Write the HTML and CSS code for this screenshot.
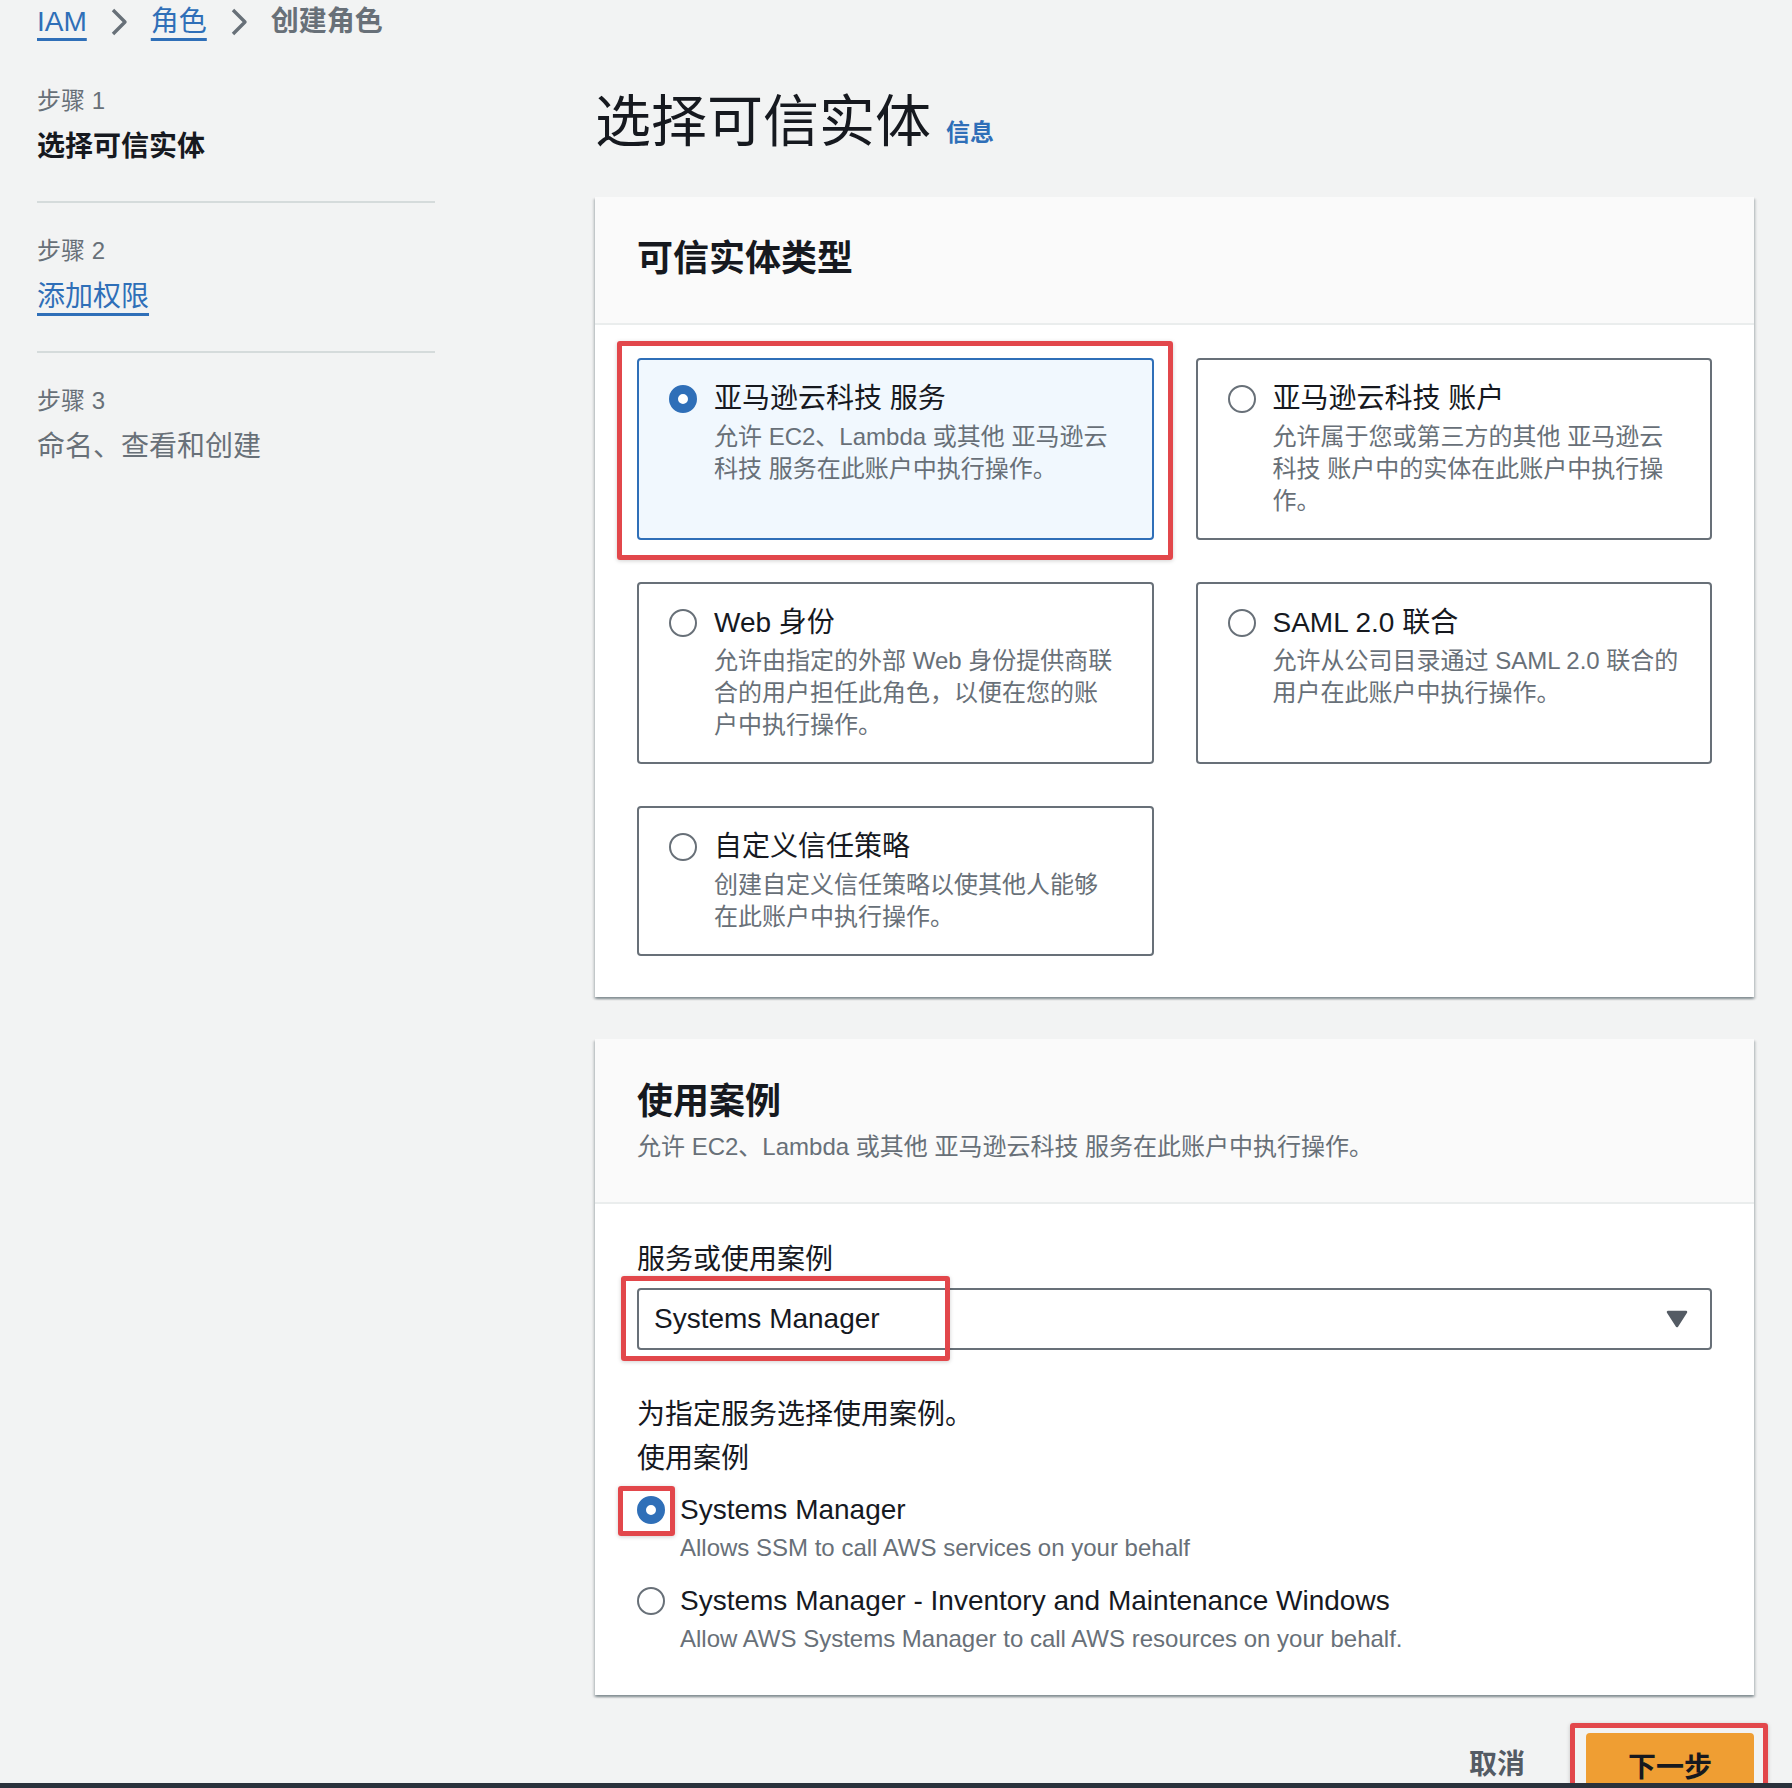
FILE: index.html
```html
<!DOCTYPE html>
<html lang="zh-CN">
<head>
<meta charset="utf-8">
<title>创建角色</title>
<link rel="stylesheet" href="styles.css">
</head>
<body>
<div class="page">
  <nav class="breadcrumb">
    <a class="crumb-link">IAM</a>
    <svg class="chev" viewBox="0 0 18 30" width="18" height="30"><polyline points="3,3 15,15 3,27" fill="none" stroke="#687078" stroke-width="3.4" stroke-linejoin="round"/></svg>
    <a class="crumb-link">角色</a>
    <svg class="chev" viewBox="0 0 18 30" width="18" height="30"><polyline points="3,3 15,15 3,27" fill="none" stroke="#687078" stroke-width="3.4" stroke-linejoin="round"/></svg>
    <span class="crumb-current">创建角色</span>
  </nav>

  <div class="layout">
    <aside class="steps">
      <div class="step">
        <div class="step-label">步骤 1</div>
        <div class="step-title current">选择可信实体</div>
      </div>
      <div class="step">
        <div class="step-label">步骤 2</div>
        <div class="step-title"><a class="step-link">添加权限</a></div>
      </div>
      <div class="step last">
        <div class="step-label">步骤 3</div>
        <div class="step-title disabled">命名、查看和创建</div>
      </div>
    </aside>

    <main class="content">
      <div class="title-row">
        <h1 class="page-title">选择可信实体</h1>
        <a class="info-link">信息</a>
      </div>

      <section class="container">
        <header class="container-header">
          <h2 class="container-title">可信实体类型</h2>
        </header>
        <div class="tiles">
          <div class="tile-wrap">
            <div class="tile selected">
              <span class="radio checked"></span>
              <div class="tile-text">
                <div class="tile-title">亚马逊云科技 服务</div>
                <div class="tile-desc">允许 EC2、Lambda 或其他 亚马逊云<br>科技 服务在此账户中执行操作。</div>
              </div>
            </div>
            <div class="highlight hl-tile"></div>
          </div>
          <div class="tile-wrap">
            <div class="tile">
              <span class="radio"></span>
              <div class="tile-text">
                <div class="tile-title">亚马逊云科技 账户</div>
                <div class="tile-desc">允许属于您或第三方的其他 亚马逊云<br>科技 账户中的实体在此账户中执行操<br>作。</div>
              </div>
            </div>
          </div>
          <div class="tile-wrap">
            <div class="tile">
              <span class="radio"></span>
              <div class="tile-text">
                <div class="tile-title">Web 身份</div>
                <div class="tile-desc">允许由指定的外部 Web 身份提供商联<br>合的用户担任此角色，以便在您的账<br>户中执行操作。</div>
              </div>
            </div>
          </div>
          <div class="tile-wrap">
            <div class="tile">
              <span class="radio"></span>
              <div class="tile-text">
                <div class="tile-title">SAML 2.0 联合</div>
                <div class="tile-desc">允许从公司目录通过 SAML 2.0 联合的<br>用户在此账户中执行操作。</div>
              </div>
            </div>
          </div>
          <div class="tile-wrap">
            <div class="tile">
              <span class="radio"></span>
              <div class="tile-text">
                <div class="tile-title">自定义信任策略</div>
                <div class="tile-desc">创建自定义信任策略以使其他人能够<br>在此账户中执行操作。</div>
              </div>
            </div>
          </div>
        </div>
      </section>

      <section class="container second">
        <header class="container-header header-with-desc">
          <h2 class="container-title">使用案例</h2>
          <p class="container-desc">允许 EC2、Lambda 或其他 亚马逊云科技 服务在此账户中执行操作。</p>
        </header>
        <div class="usecase-body">
          <div class="field-label">服务或使用案例</div>
          <div class="select-wrap">
            <div class="select">
              <span class="select-value">Systems Manager</span>
              <svg class="caret" viewBox="0 0 22 18" width="22" height="18"><polygon points="2,2 20,2 11,16" fill="#545b64" stroke="#545b64" stroke-width="2.5" stroke-linejoin="round"/></svg>
            </div>
            <div class="highlight hl-select"></div>
          </div>
          <div class="hint">为指定服务选择使用案例。</div>
          <div class="group-label">使用案例</div>
          <div class="option">
            <div class="option-radio-wrap">
              <span class="radio checked"></span>
              <div class="highlight hl-radio"></div>
            </div>
            <div class="option-text">
              <div class="option-title">Systems Manager</div>
              <div class="option-desc">Allows SSM to call AWS services on your behalf</div>
            </div>
          </div>
          <div class="option second-option">
            <div class="option-radio-wrap">
              <span class="radio"></span>
            </div>
            <div class="option-text">
              <div class="option-title">Systems Manager - Inventory and Maintenance Windows</div>
              <div class="option-desc">Allow AWS Systems Manager to call AWS resources on your behalf.</div>
            </div>
          </div>
        </div>
      </section>

      <div class="actions">
        <a class="cancel">取消</a>
        <div class="btn-wrap">
          <button class="btn-primary">下一步</button>
          <div class="highlight hl-btn"></div>
        </div>
      </div>
    </main>
  </div>
</div>
<div class="bottom-bar"></div>
</body>
</html>
```

FILE: styles.css
```css
* { box-sizing: border-box; }

html, body {
  margin: 0;
  padding: 0;
  background: #f2f3f3;
}

body {
  font-family: "Liberation Sans", "Noto Sans CJK SC", sans-serif;
  color: #16191f;
  font-size: 28px;
  line-height: 40px;
}

.page {
  padding-left: 37px;
  padding-right: 38px;
}

/* breadcrumb */
.breadcrumb {
  height: 42px;
  padding-top: 2px;
  display: flex;
  align-items: center;
  gap: 23px;
}

.crumb-link {
  color: #2f6fb8;
  text-decoration: underline;
  text-decoration-thickness: 3px;
  text-underline-offset: 7px;
  line-height: 40px;
}

.chev { display: block; }

.crumb-current {
  color: #687078;
  font-weight: 700;
}

/* layout */
.layout {
  display: flex;
  gap: 160px;
}

.steps {
  width: 398px;
  flex: none;
  padding-top: 43px;
}

.step {
  padding-bottom: 34px;
  border-bottom: 2px solid #d5dbdb;
  padding-top: 32px;
}

.step:first-child { padding-top: 0; }
.step.last { border-bottom: none; }

.step-label {
  font-size: 24px;
  line-height: 32px;
  color: #687078;
}

.step-title {
  margin-top: 10px;
  font-size: 28px;
  line-height: 40px;
}

.step-title.current { font-weight: 700; }
.step-title.disabled { color: #687078; }

.step-link {
  color: #2f6fb8;
  text-decoration: underline;
  text-decoration-thickness: 3px;
  text-underline-offset: 7px;
}

.content {
  flex: 1;
  min-width: 0;
}

.title-row {
  margin-top: 48px;
  display: flex;
  align-items: baseline;
  gap: 15px;
}

.page-title {
  margin: 0;
  font-size: 56px;
  line-height: 64px;
  font-weight: 400;
}

.info-link {
  color: #2f6fb8;
  font-size: 24px;
  font-weight: 700;
  line-height: 32px;
}

/* containers */
.container {
  margin-top: 43px;
  background: #ffffff;
  box-shadow: 0 2px 2px 0 rgba(0, 28, 36, 0.3), 2px 2px 2px 0 rgba(0, 28, 36, 0.12), -2px 2px 2px 0 rgba(0, 28, 36, 0.12);
}

.container.second { margin-top: 42px; }

.container-header {
  background: #fafafa;
  border-bottom: 2px solid #eaeded;
  padding: 40px 42px 42px;
}

.header-with-desc { padding: 41px 42px 39px; }

.container-title {
  margin: 0;
  font-size: 36px;
  line-height: 44px;
  font-weight: 700;
}

.container-desc {
  margin: 7px 0 0;
  font-size: 24px;
  line-height: 32px;
  color: #687078;
}

/* tiles */
.tiles {
  display: grid;
  grid-template-columns: 1fr 1fr;
  gap: 42px;
  padding: 33px 42px 41px;
}

.tile-wrap { position: relative; }

.tile {
  height: 100%;
  display: flex;
  align-items: flex-start;
  gap: 17px;
  padding: 19px 24px 21px 30px;
  border: 2px solid #687078;
  border-radius: 4px;
  background: #ffffff;
}

.tile.selected {
  border-color: #2f6fb8;
  background: #f1f8fe;
}

.radio {
  flex: none;
  display: block;
  width: 28px;
  height: 28px;
  border-radius: 50%;
  border: 2px solid #687078;
  background: #ffffff;
  margin-top: 6px;
}

.radio.checked {
  border: 9px solid #2f6fb8;
}

.tile-title {
  font-size: 28px;
  line-height: 40px;
}

.tile-desc {
  margin-top: 2px;
  font-size: 24px;
  line-height: 32px;
  color: #687078;
  white-space: nowrap;
}

/* highlight boxes */
.highlight {
  position: absolute;
  border: 5px solid #e2474b;
  border-radius: 3px;
  box-shadow: 0 1px 4px rgba(0, 0, 0, 0.18);
  pointer-events: none;
}

.hl-tile { top: -17px; bottom: -20px; left: -20px; right: -19px; }

/* use case body */
.usecase-body {
  padding: 36px 42px 40px;
}

.field-label {
  font-size: 28px;
  line-height: 40px;
}

.select-wrap {
  position: relative;
  margin-top: 8px;
}

.select {
  height: 62px;
  border: 2px solid #687078;
  border-radius: 4px;
  background: #ffffff;
  display: flex;
  align-items: center;
  justify-content: space-between;
  padding: 0 22px 0 15px;
}

.select-value { font-size: 28px; }

.caret { display: block; }

.hl-select { top: -12px; bottom: -11px; left: -16px; width: 329px; }

.hint {
  margin-top: 45px;
  font-size: 28px;
  line-height: 40px;
}

.group-label {
  margin-top: 4px;
  font-size: 28px;
  line-height: 40px;
}

.option {
  margin-top: 11px;
  display: flex;
  align-items: flex-start;
  gap: 15px;
}

.second-option { margin-top: 17px; }

.option-radio-wrap {
  position: relative;
  flex: none;
  padding-top: 6px;
}

.option-radio-wrap .radio { margin-top: 0; }

.hl-radio { top: -4px; left: -19px; width: 57px; height: 50px; }

.option-title {
  font-size: 28px;
  line-height: 40px;
}

.option-desc {
  margin-top: 2px;
  font-size: 24px;
  line-height: 32px;
  color: #687078;
}

/* actions */
.actions {
  margin-top: 38px;
  display: flex;
  justify-content: flex-end;
  align-items: center;
  gap: 61px;
}

.cancel {
  font-size: 28px;
  font-weight: 700;
  color: #545b64;
}

.btn-wrap { position: relative; }

.btn-primary {
  display: block;
  height: 64px;
  padding: 0 42px;
  border: none;
  border-radius: 4px;
  background: #ef9e33;
  color: #16191f;
  font-family: "Liberation Sans", "Noto Sans CJK SC", sans-serif;
  font-size: 28px;
  font-weight: 700;
}

.hl-btn { top: -10px; bottom: -14px; left: -16px; right: -14px; }

.bottom-bar {
  position: fixed;
  left: 0;
  right: 0;
  bottom: 0;
  height: 5px;
  background: #2a313b;
}
```
